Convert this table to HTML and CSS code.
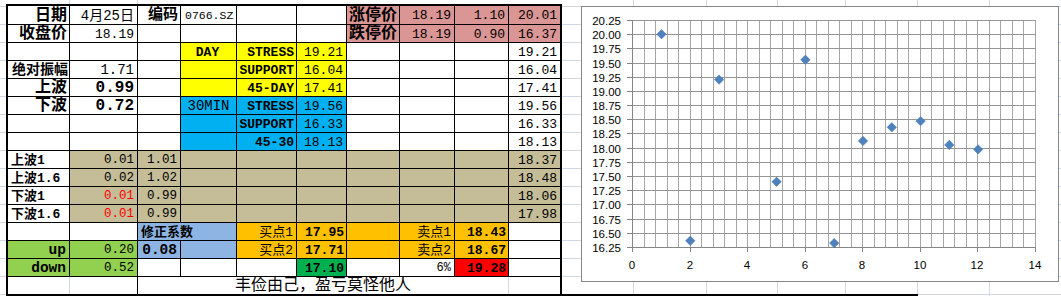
FILE: index.html
```html
<!DOCTYPE html>
<html lang="zh">
<head>
<meta charset="utf-8">
<title>0766.SZ</title>
<link rel="stylesheet" href="styles.css">
</head>
<body>
<div class="sheet">
  <div class="grid">
    <!-- row 1 -->
    <div class="c hd">日期</div>
    <div class="c dt">4月25日</div>
    <div class="c hd hd15">编码</div>
    <div class="c l code">0766.SZ</div>
    <div class="c"></div>
    <div class="c"></div>
    <div class="c pk hd">涨停价</div>
    <div class="c pk">18.19</div>
    <div class="c pk">1.10</div>
    <div class="c pk lc">20.01</div>
    <!-- row 2 -->
    <div class="c hd">收盘价</div>
    <div class="c">18.19</div>
    <div class="c"></div>
    <div class="c"></div>
    <div class="c"></div>
    <div class="c"></div>
    <div class="c pk hd">跌停价</div>
    <div class="c pk">18.19</div>
    <div class="c pk">0.90</div>
    <div class="c pk lc">16.37</div>
    <!-- row 3 -->
    <div class="c"></div>
    <div class="c"></div>
    <div class="c"></div>
    <div class="c yl m b">DAY</div>
    <div class="c yl b">STRESS</div>
    <div class="c yl">19.21</div>
    <div class="c"></div>
    <div class="c"></div>
    <div class="c"></div>
    <div class="c lc">19.21</div>
    <!-- row 4 -->
    <div class="c hd hd14">绝对振幅</div>
    <div class="c n14">1.71</div>
    <div class="c"></div>
    <div class="c yl"></div>
    <div class="c yl b">SUPPORT</div>
    <div class="c yl">16.04</div>
    <div class="c"></div>
    <div class="c"></div>
    <div class="c"></div>
    <div class="c lc">16.04</div>
    <!-- row 5 -->
    <div class="c hd">上波</div>
    <div class="c b16">0.99</div>
    <div class="c"></div>
    <div class="c yl"></div>
    <div class="c yl b">45-DAY</div>
    <div class="c yl">17.41</div>
    <div class="c"></div>
    <div class="c"></div>
    <div class="c"></div>
    <div class="c lc">17.41</div>
    <!-- row 6 -->
    <div class="c hd">下波</div>
    <div class="c b16">0.72</div>
    <div class="c"></div>
    <div class="c cy m n14">30MIN</div>
    <div class="c cy b">STRESS</div>
    <div class="c cy">19.56</div>
    <div class="c"></div>
    <div class="c"></div>
    <div class="c"></div>
    <div class="c lc">19.56</div>
    <!-- row 7 -->
    <div class="c"></div>
    <div class="c"></div>
    <div class="c"></div>
    <div class="c cy"></div>
    <div class="c cy b">SUPPORT</div>
    <div class="c cy">16.33</div>
    <div class="c"></div>
    <div class="c"></div>
    <div class="c"></div>
    <div class="c lc">16.33</div>
    <!-- row 8 -->
    <div class="c"></div>
    <div class="c"></div>
    <div class="c"></div>
    <div class="c cy"></div>
    <div class="c cy b">45-30</div>
    <div class="c cy">18.13</div>
    <div class="c"></div>
    <div class="c"></div>
    <div class="c"></div>
    <div class="c lc">18.13</div>
    <!-- row 9 -->
    <div class="c l sub">上波1</div>
    <div class="c tn n12">0.01</div>
    <div class="c tn n12">1.01</div>
    <div class="c tn"></div>
    <div class="c tn"></div>
    <div class="c tn"></div>
    <div class="c tn"></div>
    <div class="c tn"></div>
    <div class="c tn"></div>
    <div class="c tn lc">18.37</div>
    <!-- row 10 -->
    <div class="c l sub">上波1.6</div>
    <div class="c tn n12">0.02</div>
    <div class="c tn n12">1.02</div>
    <div class="c tn"></div>
    <div class="c tn"></div>
    <div class="c tn"></div>
    <div class="c tn"></div>
    <div class="c tn"></div>
    <div class="c tn"></div>
    <div class="c tn lc">18.48</div>
    <!-- row 11 -->
    <div class="c l sub">下波1</div>
    <div class="c tn n12 neg">0.01</div>
    <div class="c tn n12">0.99</div>
    <div class="c tn"></div>
    <div class="c tn"></div>
    <div class="c tn"></div>
    <div class="c tn"></div>
    <div class="c tn"></div>
    <div class="c tn"></div>
    <div class="c tn lc">18.06</div>
    <!-- row 12 -->
    <div class="c l sub">下波1.6</div>
    <div class="c tn n12 neg">0.01</div>
    <div class="c tn n12">0.99</div>
    <div class="c tn"></div>
    <div class="c tn"></div>
    <div class="c tn"></div>
    <div class="c tn"></div>
    <div class="c tn"></div>
    <div class="c tn"></div>
    <div class="c tn lc">17.98</div>
    <!-- row 13 -->
    <div class="c"></div>
    <div class="c"></div>
    <div class="c lb l sub span2">修正系数</div>
    <div class="c or">买点1</div>
    <div class="c or b">17.95</div>
    <div class="c or"></div>
    <div class="c or">卖点1</div>
    <div class="c or b">18.43</div>
    <div class="c lc"></div>
    <!-- row 14 -->
    <div class="c gn b145">up</div>
    <div class="c gn n12">0.20</div>
    <div class="c lb b145">0.08</div>
    <div class="c lb"></div>
    <div class="c or">买点2</div>
    <div class="c or b">17.71</div>
    <div class="c or"></div>
    <div class="c or">卖点2</div>
    <div class="c or b">18.67</div>
    <div class="c lc"></div>
    <!-- row 15 -->
    <div class="c gn b145">down</div>
    <div class="c gn n12">0.52</div>
    <div class="c"></div>
    <div class="c"></div>
    <div class="c"></div>
    <div class="c dg b">17.10</div>
    <div class="c"></div>
    <div class="c pct">6%</div>
    <div class="c rd b">19.28</div>
    <div class="c lc"></div>
    <!-- row 16 -->
    <div class="c lr soft"></div>
    <div class="c lr"></div>
    <div class="c lr soft m motto span7">丰俭由己，盈亏莫怪他人</div>
    <div class="c lr lc"></div>
  </div>

  <div class="side">
    <div class="chart">
      <svg class="plot" width="476" height="274" viewBox="0 0 476 274">
        <defs>
          <path id="dm" d="M0 -4.7 L4.7 0 L0 4.7 L-4.7 0Z"/>
        </defs>
        <path class="vgrid" d="M62.5 13V240M73.5 13V240M85.5 13V240M96.5 13V240M108.5 13V240M119.5 13V240M131.5 13V240M142.5 13V240M154.5 13V240M165.5 13V240M177.5 13V240M188.5 13V240M200.5 13V240M211.5 13V240M223.5 13V240M234.5 13V240M246.5 13V240M257.5 13V240M269.5 13V240M280.5 13V240M292.5 13V240M303.5 13V240M315.5 13V240M326.5 13V240M338.5 13V240M349.5 13V240M361.5 13V240M372.5 13V240M384.5 13V240M395.5 13V240M407.5 13V240M418.5 13V240M430.5 13V240M441.5 13V240M453.5 13V240"/>
        <path class="hgrid" d="M50 13.5H454M50 27.5H454M50 41.5H454M50 56.5H454M50 70.5H454M50 84.5H454M50 98.5H454M50 112.5H454M50 126.5H454M50 141.5H454M50 155.5H454M50 169.5H454M50 183.5H454M50 197.5H454M50 212.5H454M50 226.5H454"/>
        <path class="axis" d="M50.5 13V240.5H454"/>
        <path class="axis" d="M45 13.5H50M45 27.5H50M45 41.5H50M45 56.5H50M45 70.5H50M45 84.5H50M45 98.5H50M45 112.5H50M45 126.5H50M45 141.5H50M45 155.5H50M45 169.5H50M45 183.5H50M45 197.5H50M45 212.5H50M45 226.5H50M45 240.5H50M50.5 240V245M108.5 240V245M165.5 240V245M223.5 240V245M280.5 240V245M338.5 240V245M395.5 240V245M453.5 240V245"/>
        <g class="ylab">
          <text x="39" y="18">20.25</text>
          <text x="39" y="32">20.00</text>
          <text x="39" y="46">19.75</text>
          <text x="39" y="61">19.50</text>
          <text x="39" y="75">19.25</text>
          <text x="39" y="89">19.00</text>
          <text x="39" y="103">18.75</text>
          <text x="39" y="117">18.50</text>
          <text x="39" y="131">18.25</text>
          <text x="39" y="146">18.00</text>
          <text x="39" y="160">17.75</text>
          <text x="39" y="174">17.50</text>
          <text x="39" y="188">17.25</text>
          <text x="39" y="202">17.00</text>
          <text x="39" y="217">16.75</text>
          <text x="39" y="231">16.50</text>
          <text x="39" y="245">16.25</text>
        </g>
        <g class="xlab">
          <text x="50" y="262">0</text>
          <text x="108" y="262">2</text>
          <text x="165" y="262">4</text>
          <text x="223" y="262">6</text>
          <text x="280" y="262">8</text>
          <text x="338" y="262">10</text>
          <text x="395" y="262">12</text>
          <text x="453" y="262">14</text>
        </g>
        <g class="pts">
          <use href="#dm" x="79.5" y="27.2"/>
          <use href="#dm" x="108.3" y="233.8"/>
          <use href="#dm" x="137.1" y="72.6"/>
          <use href="#dm" x="194.6" y="174.8"/>
          <use href="#dm" x="223.4" y="52.8"/>
          <use href="#dm" x="252.2" y="236.1"/>
          <use href="#dm" x="281" y="133.9"/>
          <use href="#dm" x="309.8" y="120.3"/>
          <use href="#dm" x="338.6" y="114.1"/>
          <use href="#dm" x="367.3" y="137.9"/>
          <use href="#dm" x="396.1" y="142.4"/>
        </g>
      </svg>
    </div>
    <div class="range-edge"></div>
  </div>
</div>
</body>
</html>
```

FILE: styles.css
```css
* { box-sizing: border-box; }

html, body {
  margin: 0;
  padding: 0;
  height: 296px;
  overflow: hidden;
}

body {
  background-color: #fff;
  background-image:
    linear-gradient(#d0d7e5, #d0d7e5),
    linear-gradient(#d0d7e5, #d0d7e5),
    linear-gradient(#d0d7e5, #d0d7e5),
    linear-gradient(#d0d7e5, #d0d7e5),
    linear-gradient(#d0d7e5, #d0d7e5),
    linear-gradient(#d0d7e5, #d0d7e5),
    linear-gradient(#d0d7e5, #d0d7e5),
    linear-gradient(#d0d7e5, #d0d7e5),
    linear-gradient(#d0d7e5 1px, transparent 1px);
  background-size:
    1px 100%, 1px 100%, 1px 100%, 1px 100%, 1px 100%, 1px 100%, 1px 100%, 1px 100%,
    100% 18px;
  background-position:
    69px 0, 137px 0, 633px 0, 706px 0, 777px 0, 845px 0, 917px 0, 989px 0,
    0 6px;
  background-repeat:
    no-repeat, no-repeat, no-repeat, no-repeat, no-repeat, no-repeat, no-repeat, no-repeat,
    repeat;
}

.sheet {
  display: flex;
  padding: 4px 0 0 6px;
}

/* ---------- spreadsheet ---------- */
.grid {
  display: grid;
  grid-template-columns: 62px 68px 43px 56px 60px 50px 53px 55px 54px 51px;
  grid-template-rows: 19px repeat(14, 18px) 17px;
  border: 2px solid #000;
  background: #fff;
  font-family: "Liberation Mono", "Noto Sans CJK SC", monospace;
  font-size: 13px;
  color: #000;
  flex: none;
}

.c {
  border-right: 1px solid #000;
  border-bottom: 1px solid #000;
  display: flex;
  align-items: center;
  justify-content: flex-end;
  padding: 1px 3px 0 1px;
  overflow: hidden;
  white-space: nowrap;
  line-height: 1;
}

.lc { border-right: none; }
.lr { border-bottom: none; }
.soft { border-right-color: #d0d7e5; }

.l { justify-content: flex-start; padding-left: 3px; }
.m { justify-content: center; padding-left: 0; padding-right: 0; }

.span2 { grid-column: span 2; }
.span7 { grid-column: span 7; }

/* text styles */
.hd { font-weight: bold; font-size: 16px; padding-right: 2px; }
.hd15 { font-size: 15px; }
.hd14 { font-size: 14px; padding-right: 1px; }
.dt { font-size: 14px; }
.code { font-size: 11.5px; padding-left: 4px; }
.b { font-weight: bold; padding-right: 2px; }
.b16 { font-weight: bold; font-size: 16px; }
.b145 { font-weight: bold; font-size: 14.5px; }
.n14 { font-size: 14px; }
.n12 { font-size: 12.5px; }
.sub { font-weight: bold; font-size: 13px; }
.pct { font-size: 12px; }
.neg { color: #ff0000; }
.motto { font-size: 16px; }

/* fills */
.pk { background: #da9694; }
.yl { background: #ffff00; }
.cy { background: #00b0f0; }
.tn { background: #c4bd97; }
.lb { background: #8db4e2; }
.or { background: #ffc000; }
.gn { background: #92d050; }
.dg { background: #00b050; }
.rd { background: #ff0000; }

/* ---------- chart ---------- */
.side {
  display: flex;
  flex-direction: column;
  flex: 1;
}

.chart {
  margin: 2px 0 0 19px;
  width: 478px;
  height: 276px;
  border: 1px solid #868686;
  background: #fff;
}

.plot { display: block; }

.vgrid, .hgrid {
  fill: none;
  stroke: #a6a6a6;
  stroke-width: 1;
  shape-rendering: crispEdges;
}
.hgrid { stroke: #969696; }

.axis {
  fill: none;
  stroke: #868686;
  stroke-width: 1;
  shape-rendering: crispEdges;
}

.ylab, .xlab {
  font-family: "Liberation Sans", Arial, sans-serif;
  font-size: 11.5px;
  fill: #000;
}
.ylab text { text-anchor: end; }
.xlab text { text-anchor: middle; }

.pts use {
  fill: #4f81bd;
  stroke: #4a7ebb;
  stroke-width: 0.6;
}

.range-edge {
  margin-top: auto;
  width: 356px;
  height: 2px;
  background: #000;
}
```
